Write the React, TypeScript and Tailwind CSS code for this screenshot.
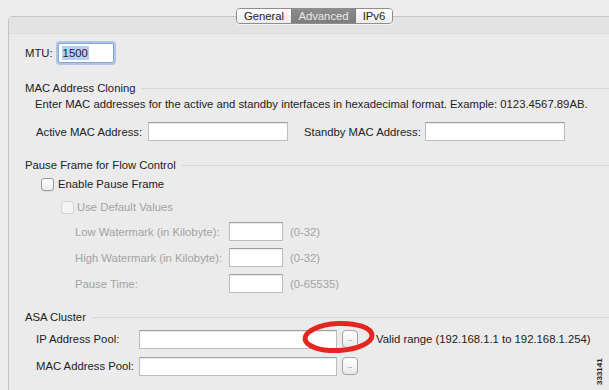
const labelDisabled = "text-[#a3a3a3]";

function Field({ className = "" }: { className?: string }) {
  return (
    <div
      className={`h-[19px] border border-[#bdbdbd] border-t-[#9f9f9f] bg-white shadow-[inset_0_1px_1px_rgba(0,0,0,0.08)] ${className}`}
    />
  );
}

function SectionHeader({ title }: { title: string }) {
  return (
    <div className="flex items-center gap-[6px] pl-[16px] h-[14px]">
      <span className="whitespace-nowrap text-[#222]">{title}</span>
      <div className="h-px flex-1 bg-[#d6d6d6]" />
    </div>
  );
}

function Checkbox({ disabled }: { disabled?: boolean }) {
  return (
    <div
      className={
        disabled
          ? "size-[13px] rounded-[3px] border border-[#d2d2d2] bg-[#f3f3f3]"
          : "size-[13px] rounded-[3px] border border-[#9b9b9b] bg-gradient-to-b from-white to-[#ececec] shadow-[0_1px_0_rgba(0,0,0,0.05)]"
      }
    />
  );
}

function BrowseButton() {
  return (
    <div className="flex h-[18px] w-[16px] items-center justify-center rounded-[4px] border border-[#a3a3a3] bg-gradient-to-b from-white to-[#e9e9e9] text-[8px] leading-none text-[#555]">
      ..
    </div>
  );
}

function WatermarkRow({ label, range }: { label: string; range: string }) {
  return (
    <div className="flex h-[19px] items-center">
      <span className={`w-[220px] shrink-0 pl-[66px] whitespace-nowrap ${labelDisabled}`}>
        {label}
      </span>
      <Field className="w-[54px]" />
      <span className={`ml-[7px] ${labelDisabled}`}>{range}</span>
    </div>
  );
}

export default function App() {
  return (
    <div
      className="relative h-[390px] w-[609px] overflow-hidden bg-[#ededed] text-[11.3px] leading-[14px] text-[#222]"
      style={{ fontFamily: '"Liberation Sans", Arial, sans-serif' }}
    >
      {/* segmented tabs */}
      <div className="relative z-10 flex pl-[236px] pt-[8px]">
        <div className="flex h-[16px] overflow-hidden rounded-[4px] border border-[#8e8e8e] shadow-[0_1px_0_rgba(255,255,255,0.6)]">
          <div className="flex w-[54px] items-center justify-center bg-gradient-to-b from-white to-[#ececec] text-[#222]">
            General
          </div>
          <div className="flex w-[65px] items-center justify-center border-x border-[#7c7c7c] bg-gradient-to-b from-[#8c8c8c] to-[#7d7d7d] text-[#eaeaea]">
            Advanced
          </div>
          <div className="flex w-[36px] items-center justify-center bg-gradient-to-b from-white to-[#ececec] text-[#222]">
            IPv6
          </div>
        </div>
      </div>

      {/* panel */}
      <div className="-mt-[8px] ml-[8px] h-[400px] w-[620px] rounded-t-[4px] border border-[#c4c4c4] bg-[#ebebeb]">
        <div className="h-[17px] border-b border-[#dedede] bg-[#e3e3e3]" />

        <div className="mt-[9px] flex h-[20px] items-center pl-[16px]">
          <span>MTU:</span>
          <div className="ml-[5px] flex h-[20px] w-[56px] items-center rounded-[2px] border border-[#86a6d8] bg-white pl-[3px] shadow-[0_0_0_2px_rgba(125,165,230,0.55)]">
            <span className="bg-[#b5d0f5] px-[1px]">1500</span>
          </div>
        </div>

        <div className="mt-[18px]">
          <SectionHeader title="MAC Address Cloning" />
        </div>
        <div className="mt-[2px] whitespace-nowrap pl-[26px]">
          Enter MAC addresses for the active and standby interfaces in hexadecimal format. Example: 0123.4567.89AB.
        </div>
        <div className="mt-[11px] flex h-[19px] items-center pl-[27px]">
          <span className="w-[112px] shrink-0">Active MAC Address:</span>
          <Field className="w-[140px]" />
          <span className="ml-[16px] w-[121px] shrink-0">Standby MAC Address:</span>
          <Field className="w-[140px]" />
        </div>

        <div className="mt-[17px]">
          <SectionHeader title="Pause Frame for Flow Control" />
        </div>
        <div className="mt-[5px] flex h-[14px] items-center gap-[4px] pl-[32px]">
          <Checkbox />
          <span>Enable Pause Frame</span>
        </div>
        <div className="mt-[9px] flex h-[14px] items-center gap-[3px] pl-[52px]">
          <Checkbox disabled />
          <span className={labelDisabled}>Use Default Values</span>
        </div>
        <div className="mt-[8px] flex flex-col gap-[7px]">
          <WatermarkRow label="Low Watermark (in Kilobyte):" range="(0-32)" />
          <WatermarkRow label="High Watermark (in Kilobyte):" range="(0-32)" />
          <WatermarkRow label="Pause Time:" range="(0-65535)" />
        </div>

        <div className="mt-[17px]">
          <SectionHeader title="ASA Cluster" />
        </div>
        <div className="mt-[5px] flex h-[20px] items-center pl-[27px]">
          <span className="w-[103px] shrink-0">IP Address Pool:</span>
          <Field className="w-[198px]" />
          <div className="ml-[5px]">
            <BrowseButton />
          </div>
          <span className="ml-[18px] whitespace-nowrap">
            Valid range (192.168.1.1 to 192.168.1.254)
          </span>
        </div>
        <div className="mt-[7px] flex h-[20px] items-center pl-[27px]">
          <span className="w-[103px] shrink-0">MAC Address Pool:</span>
          <Field className="w-[198px]" />
          <div className="ml-[5px]">
            <BrowseButton />
          </div>
        </div>
      </div>

      {/* red callout */}
      <svg
        className="absolute left-[301px] top-[319px]"
        width="75"
        height="36"
        viewBox="0 0 75 36"
      >
        <ellipse
          cx="37.5"
          cy="18"
          rx="33.5"
          ry="13.5"
          fill="none"
          stroke="#e3261f"
          strokeWidth="5"
          transform="rotate(-3 37.5 18)"
        />
      </svg>

      {/* figure id */}
      <div className="absolute left-[596px] top-[385px] origin-top-left -rotate-90 text-[8px] font-bold leading-none text-[#222]">
        333141
      </div>
    </div>
  );
}
